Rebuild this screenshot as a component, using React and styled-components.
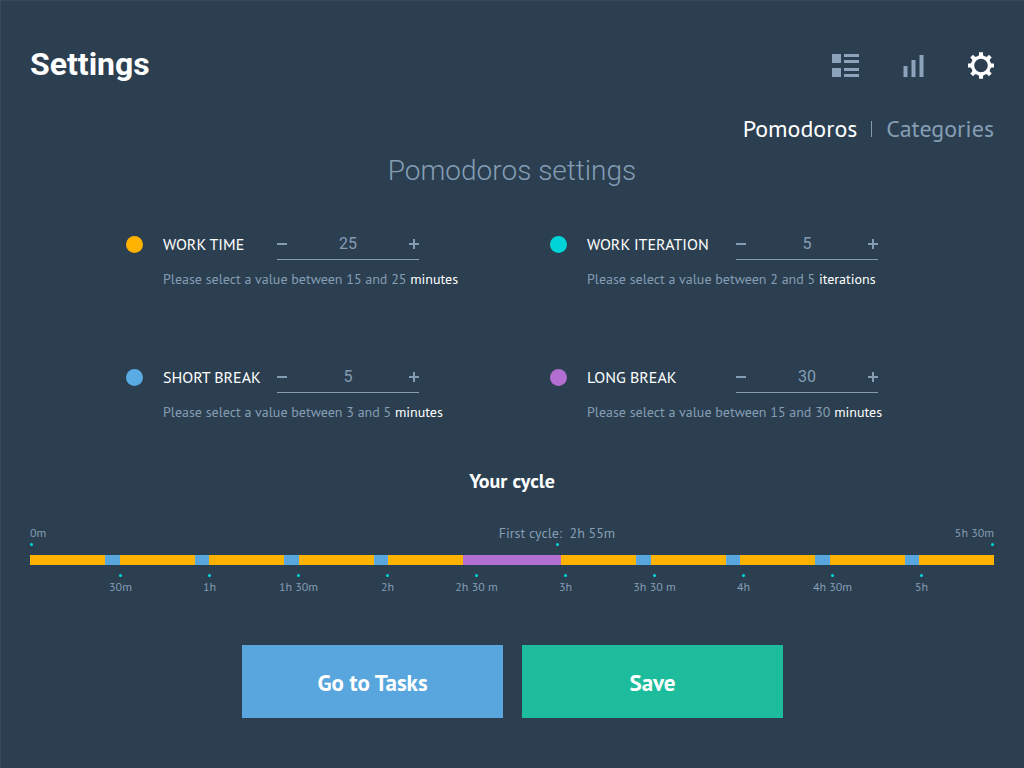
import React, { useState } from "react";
import styled, { createGlobalStyle } from "styled-components";

const sans = `"PT Sans", "Noto Sans", sans-serif`;
const muted = "#859db3";

const GlobalStyle = createGlobalStyle`
  * { box-sizing: border-box; }
  html, body, #root { min-height: 100%; }
  body { margin: 0; background: #2b3f51; font-family: ${sans}; }
  h1, h2, h3, p { margin: 0; padding: 0; }
  button, input { font: inherit; border: 0; margin: 0; padding: 0; background: none; color: inherit; }
  button { cursor: pointer; }
`;

const Page = styled.main`
  min-height: 100vh;
  padding: 43px 30px 49px 29px;
  border-top: 1px solid #34495c;
  border-left: 1px solid #34495c;
  color: #fff;
`;

const Header = styled.header`
  display: flex;
  align-items: center;
  justify-content: space-between;
`;

const Title = styled.h1`
  font: 700 32px/40px Roboto, sans-serif;
`;

const Toolbar = styled.nav`
  display: flex;
  align-items: center;
  gap: 44px;
  padding-top: 2px;
`;

const IconButton = styled.button`
  display: flex;
  color: ${(p) => (p.$active ? "#fff" : "#8ca3bb")};
`;

const Tabs = styled.nav`
  display: flex;
  align-items: center;
  justify-content: flex-end;
  margin-top: 29px;
  gap: 14px;
`;

const Tab = styled.a`
  font-size: 24px;
  line-height: 32px;
  color: ${(p) => (p.$active ? "#fff" : muted)};
  text-decoration: none;
`;

const Divider = styled.span`
  width: 1px;
  height: 16px;
  background: ${muted};
`;

const Subtitle = styled.h2`
  margin-top: 8px;
  font: 300 28px/36px Roboto, sans-serif;
  color: ${muted};
  text-align: center;
`;

const SettingsGrid = styled.div`
  display: grid;
  grid-template-columns: 1fr 1fr;
  gap: 72px 76px;
  margin-top: 39px;
  padding: 0 96px;
`;

const SettingBox = styled.section`
  display: grid;
  grid-template-columns: 17px ${(p) => p.$labelWidth}px 142px;
  column-gap: 20px;
  align-items: center;
`;

const Dot = styled.span`
  width: 17px;
  height: 17px;
  border-radius: 50%;
  background: ${(p) => p.$color};
`;

const Label = styled.label`
  font-size: 16px;
  line-height: 20px;
  white-space: nowrap;
`;

const Stepper = styled.div`
  display: flex;
  align-items: center;
  height: 32px;
  border-bottom: 1px solid ${muted};
  color: ${muted};
`;

const StepButton = styled.button`
  display: flex;
`;

const Value = styled.input`
  flex: 1;
  min-width: 0;
  font: 400 16px/20px Roboto, sans-serif;
  text-align: center;
`;

const Hint = styled.p`
  grid-column: 2 / -1;
  margin-top: 9px;
  font-size: 14px;
  line-height: 20px;
  color: ${muted};
  white-space: nowrap;
`;

const Unit = styled.span`
  color: #fff;
`;

const CycleTitle = styled.h3`
  margin-top: 47px;
  font-size: 20px;
  line-height: 24px;
  text-align: center;
`;

const Timeline = styled.section`
  margin-top: 32px;
`;

const TopMarks = styled.div`
  display: grid;
  grid-template-columns: 462fr 130fr 372fr;
  margin-bottom: 9px;
`;

const Mark = styled.div`
  display: flex;
  flex-direction: column;
  align-items: ${(p) => p.$align || "center"};
  gap: 2px;
  font-size: ${(p) => (p.$large ? 14 : 12)}px;
  line-height: 16px;
  color: ${muted};
  white-space: pre;
`;

const Pip = styled.span`
  width: 3px;
  height: 3px;
  border-radius: 50%;
  background: #00d8dc;
`;

const Bar = styled.div`
  display: flex;
  height: 10px;
`;

const Segment = styled.span`
  flex: ${(p) => p.$size} 0 0;
  background: ${(p) => p.$color};
`;

const Ticks = styled.div`
  display: grid;
  grid-template-columns: repeat(10, 1fr);
  margin-top: 9px;
  padding: 0 28px 0 46px;
`;

const Actions = styled.div`
  display: grid;
  grid-template-columns: 1fr 1fr;
  gap: 19px;
  margin-top: 50px;
  padding: 0 211px 0 212px;
`;

const ActionButton = styled.button`
  padding: 21px 20px 19px;
  background: ${(p) => p.$color};
  font-size: 23px;
  font-weight: 700;
  line-height: 33px;
`;

const settings = [
  { id: "work-time", label: "WORK TIME", color: "#ffb200", start: 25, min: 15, max: 25, unit: "minutes", labelWidth: 94 },
  { id: "work-iteration", label: "WORK ITERATION", color: "#00d4d9", start: 5, min: 2, max: 5, unit: "iterations", labelWidth: 129 },
  { id: "short-break", label: "SHORT BREAK", color: "#59abe3", start: 5, min: 3, max: 5, unit: "minutes", labelWidth: 94 },
  { id: "long-break", label: "LONG BREAK", color: "#b26fd1", start: 30, min: 15, max: 30, unit: "minutes", labelWidth: 129 },
];

const work = { size: 300, color: "#ffb200" };
const rest = { size: 58, color: "#58a6dd" };
const longRest = { size: 392, color: "#b26fd1" };
const iteration = [work, rest, work, rest, work, rest, work, rest, work];
const segments = [...iteration, longRest, ...iteration];

const ticks = ["30m", "1h", "1h 30m", "2h", "2h 30 m", "3h", "3h 30 m", "4h", "4h 30m", "5h"];

function ListIcon() {
  return (
    <svg width="27" height="23" viewBox="0 0 27 23" fill="currentColor">
      <path d="M0 0h9v9H0zM0 14h9v9H0zM12 0h15v3H12zM12 6h15v3H12zM12 14h15v3H12zM12 20h15v3H12z" />
    </svg>
  );
}

function ChartIcon() {
  return (
    <svg width="21" height="23" viewBox="0 0 21 23" fill="currentColor">
      <path d="M.5 12h4v11h-4zM8.500 6h4v17h-4zM16.500 1h4v22h-4z" />
    </svg>
  );
}

function GearIcon() {
  return (
    <svg width="26" height="27" viewBox="-13 -13.5 26 27" fill="currentColor">
      <path fillRule="evenodd" d="M0-10a10 10 0 1 1 0 20a10 10 0 1 1 0-20zM0-6.800a6.800 6.800 0 1 0 0 13.600a6.800 6.800 0 1 0 0-13.600z" />
      {[0, 45, 90, 135, 180, 225, 270, 315].map((a) => (
        <path key={a} transform={`rotate(${a})`} d="M-3.300-9L-2-10.500V-13.200H2V-10.500L3.300-9z" />
      ))}
    </svg>
  );
}

function StepIcon({ plus }) {
  return (
    <svg width="10" height="10" viewBox="0 0 10 10" fill="currentColor">
      <path d={plus ? "M0 4h10v2H0zM4 0h2v10H4z" : "M0 4h10v2H0z"} />
    </svg>
  );
}

function Setting({ id, label, color, start, min, max, unit, labelWidth }) {
  const [value, setValue] = useState(start);
  const step = (by) => setValue((v) => Math.min(max, Math.max(min, Number(v) + by)));
  return (
    <SettingBox $labelWidth={labelWidth}>
      <Dot $color={color} />
      <Label htmlFor={id}>{label}</Label>
      <Stepper>
        <StepButton type="button" aria-label="Decrease" onClick={() => step(-1)}>
          <StepIcon />
        </StepButton>
        <Value id={id} inputMode="numeric" value={value} onChange={(e) => setValue(e.target.value)} />
        <StepButton type="button" aria-label="Increase" onClick={() => step(1)}>
          <StepIcon plus />
        </StepButton>
      </Stepper>
      <Hint>
        Please select a value between {min} and {max} <Unit>{unit}</Unit>
      </Hint>
    </SettingBox>
  );
}

export default function App() {
  return (
    <Page>
      <GlobalStyle />
      <Header>
        <Title>Settings</Title>
        <Toolbar>
          <IconButton aria-label="Tasks"><ListIcon /></IconButton>
          <IconButton aria-label="Reports"><ChartIcon /></IconButton>
          <IconButton aria-label="Settings" $active><GearIcon /></IconButton>
        </Toolbar>
      </Header>
      <Tabs>
        <Tab href="#pomodoros" $active>Pomodoros</Tab>
        <Divider />
        <Tab href="#categories">Categories</Tab>
      </Tabs>
      <Subtitle>Pomodoros settings</Subtitle>
      <SettingsGrid>
        {settings.map((s) => <Setting key={s.id} {...s} />)}
      </SettingsGrid>
      <CycleTitle>Your cycle</CycleTitle>
      <Timeline>
        <TopMarks>
          <Mark $align="flex-start">0m<Pip /></Mark>
          <Mark $large>{"First cycle:  2h 55m"}<Pip /></Mark>
          <Mark $align="flex-end">5h 30m<Pip /></Mark>
        </TopMarks>
        <Bar>
          {segments.map((s, i) => <Segment key={i} $size={s.size} $color={s.color} />)}
        </Bar>
        <Ticks>
          {ticks.map((t) => <Mark key={t}><Pip />{t}</Mark>)}
        </Ticks>
      </Timeline>
      <Actions>
        <ActionButton type="button" $color="#58a6dd">Go to Tasks</ActionButton>
        <ActionButton type="button" $color="#1dbc9c">Save</ActionButton>
      </Actions>
    </Page>
  );
}
